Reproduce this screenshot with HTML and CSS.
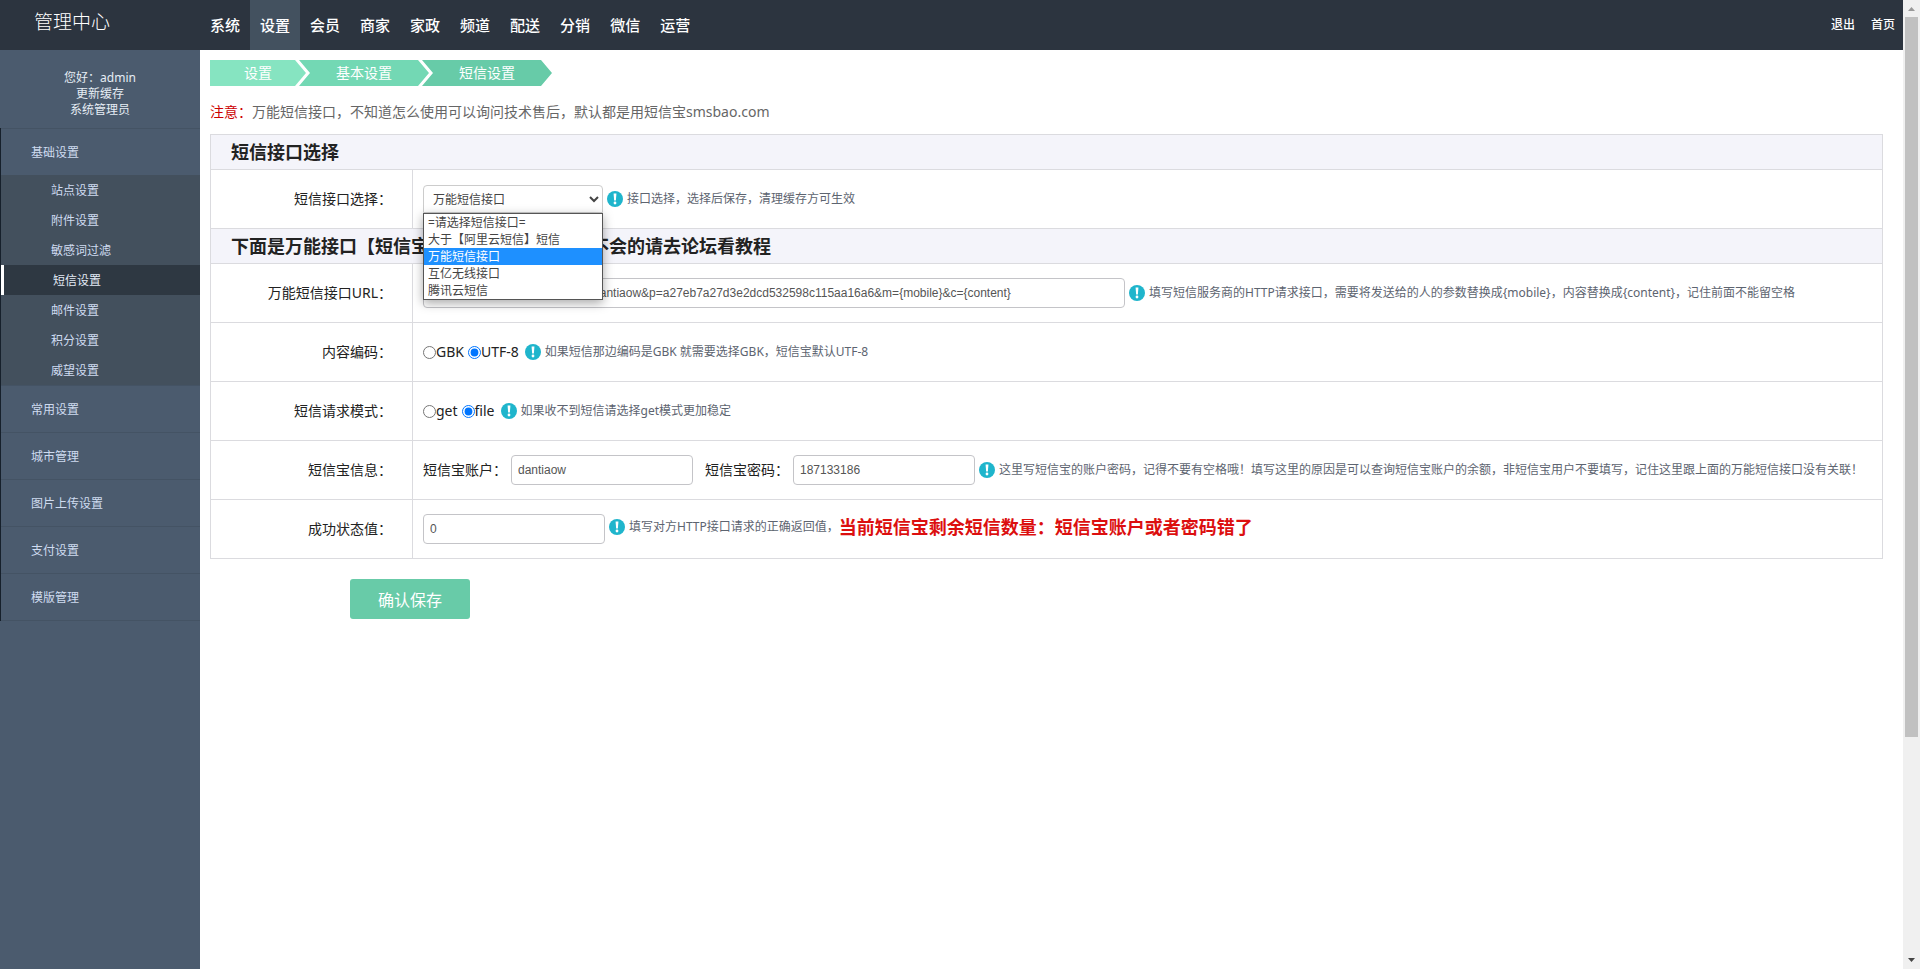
FILE: index.html
```html
<!DOCTYPE html>
<html lang="zh-CN">
<head>
    <meta charset="UTF-8">
    <meta name="viewport" content="width=device-width, initial-scale=1.0">
    <title>管理中心</title>
    <link rel="stylesheet" href="styles.css">
</head>
<body>
    <svg class="sprite" aria-hidden="true">
        <symbol id="tip-icon" viewBox="0 0 16 16">
            <circle cx="8" cy="8" r="8" fill="#1fb5cc"/>
            <path d="M6.600 2.600h2.800l-.5 7H7.100z" fill="#fff"/>
            <circle cx="8" cy="12" r="1.400" fill="#fff"/>
        </symbol>
    </svg>

    <div class="page">
        <header class="header">
            <div class="logo">管理中心</div>
            <nav class="nav">
                <a href="#">系统</a>
                <a href="#" class="active">设置</a>
                <a href="#">会员</a>
                <a href="#">商家</a>
                <a href="#">家政</a>
                <a href="#">频道</a>
                <a href="#">配送</a>
                <a href="#">分销</a>
                <a href="#">微信</a>
                <a href="#">运营</a>
            </nav>
            <div class="top-links">
                <a href="#">退出</a>
                <a href="#">首页</a>
            </div>
        </header>

        <div class="wrap">
            <aside class="sidebar">
                <div class="user">
                    <div>您好：admin</div>
                    <a href="#">更新缓存</a>
                    <div>系统管理员</div>
                </div>
                <ul class="menu">
                    <li>
                        <a href="#" class="menu-title">基础设置</a>
                        <ul class="submenu">
                            <li><a href="#">站点设置</a></li>
                            <li><a href="#">附件设置</a></li>
                            <li><a href="#">敏感词过滤</a></li>
                            <li><a href="#" class="on">短信设置</a></li>
                            <li><a href="#">邮件设置</a></li>
                            <li><a href="#">积分设置</a></li>
                            <li><a href="#">威望设置</a></li>
                        </ul>
                    </li>
                    <li><a href="#" class="menu-title">常用设置</a></li>
                    <li><a href="#" class="menu-title">城市管理</a></li>
                    <li><a href="#" class="menu-title">图片上传设置</a></li>
                    <li><a href="#" class="menu-title">支付设置</a></li>
                    <li><a href="#" class="menu-title">模版管理</a></li>
                </ul>
            </aside>

            <main class="main">
                <ul class="crumbs">
                    <li class="crumb first">设置</li>
                    <li class="crumb second">基本设置</li>
                    <li class="crumb third">短信设置</li>
                </ul>
                <p class="notice"><span>注意：</span>万能短信接口，不知道怎么使用可以询问技术售后，默认都是用短信宝smsbao.com</p>

                <form>
                    <table class="form-table">
                        <tr>
                            <th colspan="2" class="section">短信接口选择</th>
                        </tr>
                        <tr>
                            <td class="name"><label for="type">短信接口选择：</label></td>
                            <td>
                                <div class="field">
                                    <div class="select-box">
                                        <select id="type" name="type">
                                            <option>=请选择短信接口=</option>
                                            <option>大于【阿里云短信】短信</option>
                                            <option selected>万能短信接口</option>
                                            <option>互亿无线接口</option>
                                            <option>腾讯云短信</option>
                                        </select>
                                        <ul class="options">
                                            <li>=请选择短信接口=</li>
                                            <li>大于【阿里云短信】短信</li>
                                            <li class="selected">万能短信接口</li>
                                            <li>互亿无线接口</li>
                                            <li>腾讯云短信</li>
                                        </ul>
                                    </div>
                                    <span class="tip"><svg><use href="#tip-icon"/></svg>接口选择，选择后保存，清理缓存方可生效</span>
                                </div>
                            </td>
                        </tr>
                        <tr>
                            <th colspan="2" class="section">下面是万能接口【短信宝】接口地址的设置，不会的请去论坛看教程</th>
                        </tr>
                        <tr>
                            <td class="name"><label for="url">万能短信接口URL：</label></td>
                            <td>
                                <div class="field">
                                    <input type="text" id="url" class="text long" value="http://api.smsbao.com/sms?u=dantiaow&amp;p=a27eb7a27d3e2dcd532598c115aa16a6&amp;m={mobile}&amp;c={content}">
                                    <span class="tip"><svg><use href="#tip-icon"/></svg>填写短信服务商的HTTP请求接口，需要将发送给的人的参数替换成{mobile}，内容替换成{content}，记住前面不能留空格</span>
                                </div>
                            </td>
                        </tr>
                        <tr>
                            <td class="name">内容编码：</td>
                            <td>
                                <div class="field">
                                    <label class="radio"><input type="radio" name="charset">GBK</label>
                                    <label class="radio"><input type="radio" name="charset" checked>UTF-8</label>
                                    <span class="tip"><svg><use href="#tip-icon"/></svg>如果短信那边编码是GBK 就需要选择GBK，短信宝默认UTF-8</span>
                                </div>
                            </td>
                        </tr>
                        <tr>
                            <td class="name">短信请求模式：</td>
                            <td>
                                <div class="field">
                                    <label class="radio"><input type="radio" name="mode">get</label>
                                    <label class="radio"><input type="radio" name="mode" checked>file</label>
                                    <span class="tip"><svg><use href="#tip-icon"/></svg>如果收不到短信请选择get模式更加稳定</span>
                                </div>
                            </td>
                        </tr>
                        <tr>
                            <td class="name">短信宝信息：</td>
                            <td>
                                <div class="field">
                                    <label for="account">短信宝账户：</label>
                                    <input type="text" id="account" class="text" value="dantiaow">
                                    <label class="second-label" for="password">短信宝密码：</label>
                                    <input type="text" id="password" class="text" value="187133186">
                                    <span class="tip"><svg><use href="#tip-icon"/></svg>这里写短信宝的账户密码，记得不要有空格哦！填写这里的原因是可以查询短信宝账户的余额，非短信宝用户不要填写，记住这里跟上面的万能短信接口没有关联！</span>
                                </div>
                            </td>
                        </tr>
                        <tr>
                            <td class="name"><label for="code">成功状态值：</label></td>
                            <td>
                                <div class="field">
                                    <input type="text" id="code" class="text" value="0">
                                    <div class="status">
                                        <span class="tip"><svg><use href="#tip-icon"/></svg>填写对方HTTP接口请求的正确返回值，</span>
                                        <strong class="warning">当前短信宝剩余短信数量：短信宝账户或者密码错了</strong>
                                    </div>
                                </div>
                            </td>
                        </tr>
                    </table>
                    <button type="submit" class="save">确认保存</button>
                </form>
            </main>
        </div>
    </div>

    <div class="scrollbar" aria-hidden="true">
        <svg class="arrow up" viewBox="0 0 17 17"><path d="M5 11h7L8.500 7z"/></svg>
        <div class="track"><div class="thumb"></div></div>
        <svg class="arrow down" viewBox="0 0 17 17"><path d="M5 6h7l-3.500 4z"/></svg>
    </div>
</body>
</html>
```

FILE: styles.css
```css
* {
    box-sizing: border-box;
}

body {
    margin: 0;
    display: flex;
    height: 100vh;
    overflow: hidden;
    background: #fff;
    color: #222;
    font-family: "Noto Sans", "Noto Sans CJK SC", sans-serif;
    font-size: 14px;
    line-height: 20px;
}

ul {
    margin: 0;
    padding: 0;
    list-style: none;
}

a {
    color: inherit;
    text-decoration: none;
}

.sprite {
    display: none;
}

.page {
    flex: 1;
    min-width: 0;
    display: flex;
    flex-direction: column;
}

/* header */
.header {
    display: flex;
    height: 50px;
    background: #2c343f;
    color: #fff;
}

.logo {
    width: 200px;
    padding-left: 34px;
    font-size: 19px;
    font-weight: 300;
    line-height: 44px;
}

.nav {
    display: flex;
    flex: 1;
}

.nav a {
    padding: 0 10px;
    font-size: 15px;
    font-weight: 500;
    line-height: 50px;
}

.nav a.active {
    background: #43515f;
}

.top-links {
    display: flex;
    gap: 16px;
    padding-right: 8px;
    font-size: 12px;
    font-weight: 500;
    line-height: 50px;
}

.wrap {
    display: flex;
    flex: 1;
}

/* sidebar */
.sidebar {
    width: 200px;
    flex: none;
    background: #4b5b6e;
    color: #cfdbf0;
    font-size: 12px;
}

.user {
    display: flex;
    flex-direction: column;
    height: 78px;
    padding-top: 20px;
    text-align: center;
    line-height: 16px;
    color: #e6edf5;
}

.menu {
    border-left: 1px solid #16202b;
}

.menu-title {
    display: block;
    height: 47px;
    padding-left: 30px;
    border-top: 1px solid #445364;
    line-height: 48px;
}

.submenu {
    background: #43505d;
}

.submenu a {
    display: block;
    height: 30px;
    padding-left: 50px;
    line-height: 32px;
}

.submenu a.on {
    padding-left: 49px;
    border-left: 3px solid #fff;
    background: #2e3842;
    color: #e3eaf5;
}

.menu > li:last-child {
    border-bottom: 1px solid #445364;
}

/* content */
.main {
    flex: 1;
    min-width: 0;
    padding: 10px 20px 10px 10px;
}

.crumbs {
    display: flex;
}

.crumb {
    height: 26px;
    padding: 0 37px;
    line-height: 26px;
    color: #fff;
    clip-path: polygon(0 0, calc(100% - 11px) 0, 100% 50%, calc(100% - 11px) 100%, 0 100%, 11px 50%);
}

.crumb + .crumb {
    margin-left: -7px;
}

.crumb.first {
    padding: 0 34px;
    background: #86e4c1;
    clip-path: polygon(0 0, calc(100% - 11px) 0, 100% 50%, calc(100% - 11px) 100%, 0 100%);
}

.crumb.second {
    background: #73d8b4;
}

.crumb.third {
    background: #67cba8;
}

.notice {
    margin: 16px 0 12px;
    color: #666;
}

.notice span {
    color: #c00;
}

.form-table {
    width: 100%;
    border-collapse: collapse;
}

.form-table th,
.form-table td {
    border: 1px solid #dbdbdf;
}

.form-table td {
    height: 59px;
    padding: 0 10px;
}

.form-table th.section {
    height: 35px;
    padding: 0 20px;
    background: #f4f4fa;
    text-align: left;
    font-size: 18px;
    line-height: 26px;
}

.form-table td.name {
    width: 202px;
    padding-right: 20px;
    text-align: right;
}

.field {
    display: flex;
    align-items: center;
    gap: 4px;
    white-space: nowrap;
}

.text {
    width: 182px;
    height: 30px;
    padding: 0 6px;
    border: 1px solid #c4c4c8;
    border-radius: 4px;
    background: #fff;
    color: #555;
    font-family: "Liberation Sans", Arial, sans-serif;
    font-size: 12px;
}

.text.long {
    width: 702px;
}

.select-box {
    position: relative;
    width: 180px;
}

.select-box select {
    display: block;
    width: 100%;
    height: 28px;
    padding: 0 5px;
    border: 1px solid #ccc;
    border-radius: 4px 4px 0 0;
    background: #fff;
    color: #444;
    font-family: inherit;
    font-size: 12px;
}

/* opened list, lies over the rows below */
.options {
    position: absolute;
    top: 100%;
    left: 0;
    z-index: 5;
    width: 100%;
    border: 1px solid #555;
    background: #fff;
    box-shadow: 0 3px 10px rgba(0, 0, 0, 0.35);
    color: #444;
    font-size: 12px;
}

.options li {
    padding-left: 4px;
    line-height: 17px;
}

.options li.selected {
    background: #1e90ff;
    color: #fff;
}

.tip {
    display: flex;
    align-items: center;
    gap: 4px;
    color: #5d6470;
    font-size: 12px;
}

.tip svg {
    width: 16px;
    height: 16px;
}

.radio {
    display: flex;
    align-items: center;
}

.radio input {
    width: 13px;
    height: 13px;
    margin: 0;
}

.radio + .tip {
    margin-left: 2px;
}

.second-label {
    margin-left: 8px;
}

.status {
    display: flex;
    align-items: center;
    padding-bottom: 4px;
}

.warning {
    color: #dc0f0f;
    font-size: 18px;
}

.save {
    display: block;
    width: 120px;
    height: 40px;
    margin: 20px 0 0 140px;
    border: 0;
    border-radius: 3px;
    background: #68cba8;
    color: #fff;
    font-family: inherit;
    font-size: 16px;
}

/* window scrollbar */
.scrollbar {
    display: flex;
    flex-direction: column;
    width: 17px;
    background: #f0f0f0;
}

.arrow {
    width: 17px;
    height: 17px;
    fill: #444;
}

.arrow.up {
    fill: #999;
}

.track {
    flex: 1;
    padding: 0 2px;
}

.thumb {
    height: 77%;
    background: #c1c1c1;
}
```
